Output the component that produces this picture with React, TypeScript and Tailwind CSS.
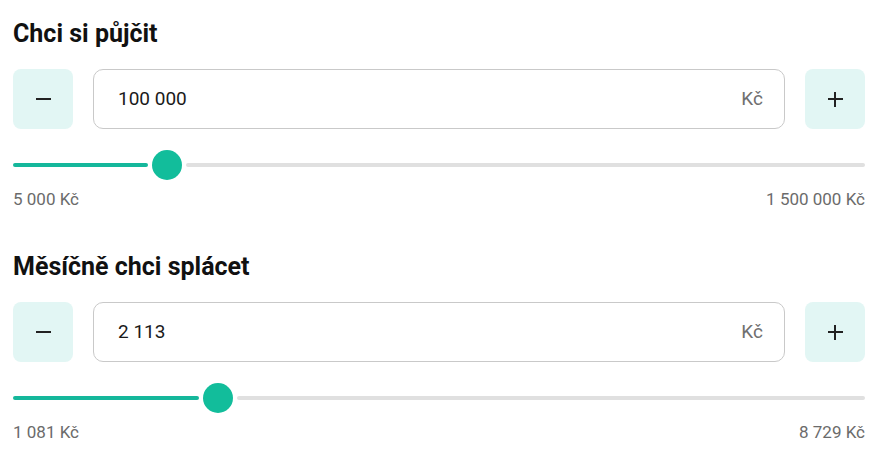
import { useState } from "react";

// Jedno pole kalkulačky: nadpis, vstup s tlačítky, posuvník a min/max
interface FieldProps {
  title: string;
  value: string;
  min: string;
  max: string;
  pos: number; // px od začátku dráhy ke středu jezdce
  className?: string;
}

const Field = ({ title, value, min, max, pos, className }: FieldProps) => {
  const [val] = useState(value);

  return (
    <section className={className}>
      <h2 className="text-[25px] leading-[32px] font-bold text-[#111]">{title}</h2>

      {/* vstup s tlačítky */}
      <div className="mt-[19px] flex h-[60px] gap-5">
        <button className="flex h-[60px] w-[60px] shrink-0 items-center justify-center rounded-lg bg-[#e2f6f4]">
          <span className="block h-[2px] w-[15px] bg-[#222]" />
        </button>
        <div className="flex flex-1 items-center justify-between rounded-[10px] border border-[#c9c9c9] bg-white pl-6 pr-[21px]">
          <span className="text-[19px] text-[#1a1a1a]">{val}</span>
          <span className="text-[19px] text-[#707070]">Kč</span>
        </div>
        <button className="relative flex h-[60px] w-[60px] shrink-0 items-center justify-center rounded-lg bg-[#e2f6f4]">
          <span className="absolute h-[2px] w-[15px] bg-[#222]" />
          <span className="absolute h-[15px] w-[2px] bg-[#222]" />
        </button>
      </div>

      {/* posuvník */}
      <div className="mt-[21px] flex h-[30px] items-center">
        <div className="h-1 rounded-full bg-[#15b79b]" style={{ width: pos - 19 }} />
        <div className="ml-1 mr-1 h-[30px] w-[30px] shrink-0 rounded-full bg-[#12bd9b]" />
        <div className="h-1 flex-1 rounded-full bg-[#e0e0e0]" />
      </div>

      <div className="mt-[9px] flex justify-between text-[17px] leading-5 text-[#6b6b6b]">
        <span>{min}</span>
        <span>{max}</span>
      </div>
    </section>
  );
};

export default function App() {
  return (
    <div className="min-h-[457px] bg-white font-['Roboto',sans-serif]">
      <div className="ml-[13px] w-[852px] pt-[18px]">
        <Field title="Chci si půjčit" value="100 000" min="5 000 Kč" max="1 500 000 Kč" pos={154} />
        <Field
          className="mt-[42px]"
          title="Měsíčně chci splácet"
          value="2 113"
          min="1 081 Kč"
          max="8 729 Kč"
          pos={205}
        />
      </div>
    </div>
  );
}
